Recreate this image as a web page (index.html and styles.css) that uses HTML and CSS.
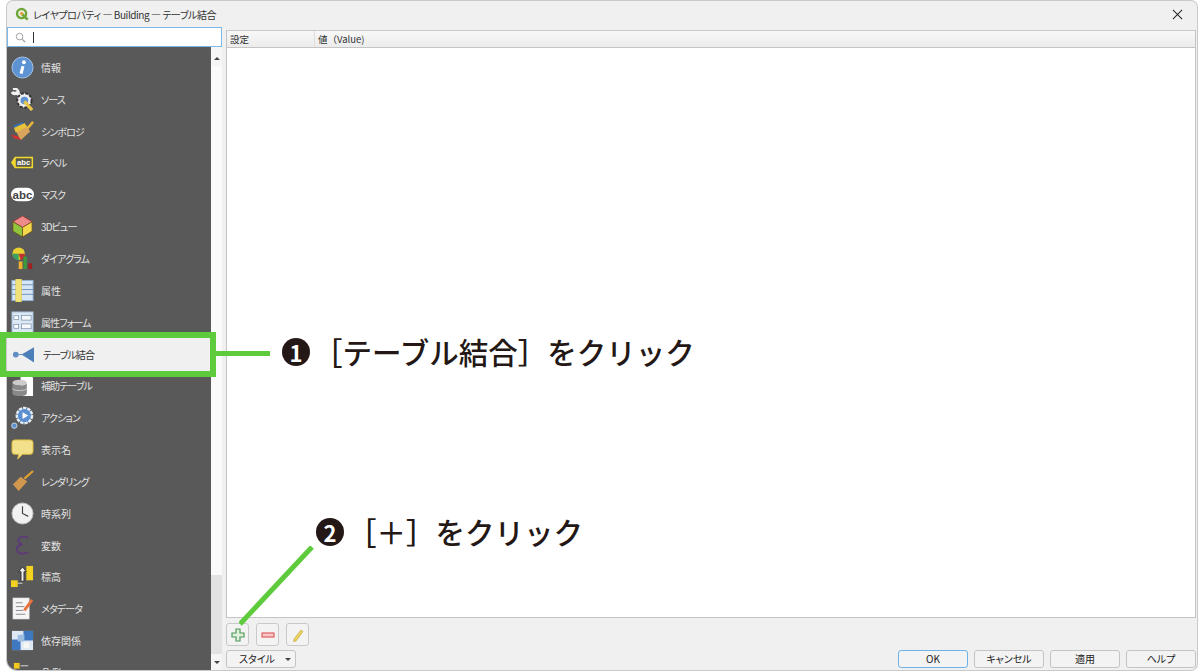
FILE: index.html
```html
<!DOCTYPE html>
<html lang="ja">
<head>
    <meta charset="UTF-8">
    <title>レイヤプロパティ — Building — テーブル結合</title>
    <link rel="stylesheet" href="styles.css">
</head>
<body>
    <div class="window">
        <div class="titlebar">
            <svg class="app-logo" viewBox="0 0 16 16">
                <circle cx="7.5" cy="7.5" r="5.2" fill="none" stroke="#6fa83a" stroke-width="2.8"/>
                <path d="M8 8 L14.5 14.5" stroke="#6fa83a" stroke-width="3"/>
                <circle cx="7.5" cy="7.5" r="2" fill="#e8a33a"/>
            </svg>
            <span class="title-text">レイヤプロパティ — Building — テーブル結合</span>
            <svg class="close-icon" viewBox="0 0 12 12"><path d="M1 1 L11 11 M11 1 L1 11" stroke="#222" stroke-width="1.1"/></svg>
        </div>
        <div class="content">
            <div class="sidebar">
                <div class="search">
                    <svg class="search-icon" viewBox="0 0 12 12"><circle cx="5" cy="5" r="3.6" fill="none" stroke="#999" stroke-width="1"/><path d="M8 8 L11 11" stroke="#999" stroke-width="1.4"/></svg>
                    <span class="caret"></span>
                </div>
                <div class="nav-wrap">
                    <div class="nav">
                        <div class="nav-item">
                            <svg class="ico" viewBox="0 0 24 24"><circle cx="12" cy="12" r="11" fill="#5d92d3" stroke="#a9c6e8"/><circle cx="13.5" cy="6.5" r="2" fill="#fff"/><path d="M12.5 10.5 L10.5 18.5" stroke="#fff" stroke-width="3.2"/></svg>
                            <span>情報</span>
                        </div>
                        <div class="nav-item">
                            <svg class="ico" viewBox="0 0 24 24"><path d="M1 4 Q3 7 6 5 L14 12" stroke="#f2f2f2" stroke-width="3.4" fill="none"/><circle cx="14" cy="13" r="7.5" fill="#eee" stroke="#333" stroke-dasharray="3 1.5" stroke-width="2"/><circle cx="14" cy="13" r="4" fill="#5d92d3"/><path d="M2 1 Q8 0 8 6" stroke="#f2f2f2" stroke-width="2.4" fill="none"/><path d="M14 14 L22 23" stroke="#e8c64a" stroke-width="3.4"/></svg>
                            <span class="kana">ソース</span>
                        </div>
                        <div class="nav-item">
                            <svg class="ico" viewBox="0 0 24 24"><path d="M4 9 L15 5 L20 12 L10 21 Z" fill="#d9a55c"/><path d="M3 8 L14 3 L17 7 L5 13 Z" fill="#e8c33a"/><path d="M0 15 L7 17 L11 21 L3 19 Z" fill="#d43030"/><path d="M2 6 L12 2 L14 3 L3 8 Z" fill="#3a6fb0"/><path d="M17 9 L23 2" stroke="#e3b53a" stroke-width="2.6"/></svg>
                            <span class="kana">シンボロジ</span>
                        </div>
                        <div class="nav-item">
                            <svg class="ico ico-wide" viewBox="0 0 24 24"><path d="M0 12 L4 6 H23 V18 H4 Z" fill="#f0d82e"/><rect x="5" y="7.5" width="16.5" height="9" rx="1" fill="#5a5a4a"/><text class="ico-text" x="13.2" y="15" text-anchor="middle" fill="#fff">abc</text></svg>
                            <span class="kana">ラベル</span>
                        </div>
                        <div class="nav-item">
                            <svg class="ico" viewBox="0 0 24 24"><rect x="0" y="5" width="24" height="14" rx="7" fill="#fff"/><text class="ico-text ico-text-big" x="12" y="16.5" text-anchor="middle" fill="#444">abc</text></svg>
                            <span class="kana">マスク</span>
                        </div>
                        <div class="nav-item">
                            <svg class="ico" viewBox="0 0 24 24"><path d="M12 1 L22 7 L12 13 L2 7 Z" fill="#ee8a8a" stroke="#a33" stroke-width=".8"/><path d="M2 7 L12 13 V23 L2 17 Z" fill="#8fc63c" stroke="#6a4a1a" stroke-width=".8"/><path d="M22 7 L12 13 V23 L22 17 Z" fill="#f2d84a" stroke="#6a4a1a" stroke-width=".8"/></svg>
                            <span class="kana">3Dビュー</span>
                        </div>
                        <div class="nav-item">
                            <svg class="ico" viewBox="0 0 24 24"><circle cx="8" cy="7" r="6.5" fill="#e8d030"/><path d="M8 7 L8 14 A7 7 0 0 1 1.5 7 Z" fill="#3aa060"/><path d="M8 7 L14.5 7 A7 7 0 0 1 10 13.5 Z" fill="#c03030"/><rect x="8" y="15" width="4" height="8" fill="#f0b030"/><rect x="13" y="10" width="3.5" height="13" fill="#3c9a3c"/><rect x="18" y="17" width="4" height="6" fill="#a02020"/></svg>
                            <span class="kana">ダイアグラム</span>
                        </div>
                        <div class="nav-item">
                            <svg class="ico" viewBox="0 0 24 24"><rect x="1" y="1.5" width="22" height="21" fill="#d7e6f5" stroke="#8fb2d6"/><path d="M1 6 H23 M1 11 H23 M1 16 H23" stroke="#6d92b8"/><rect x="5" y="0" width="6" height="24" fill="#f2e27a" stroke="#d9c64a" stroke-width=".6"/></svg>
                            <span>属性</span>
                        </div>
                        <div class="nav-item">
                            <svg class="ico" viewBox="0 0 24 24"><rect x="1" y="1" width="22" height="22" fill="#dce8f4" stroke="#9fbbd6"/><rect x="3" y="5" width="5" height="4" fill="#fff" stroke="#6d88a6" stroke-width=".7"/><rect x="3" y="14" width="5" height="4" fill="#fff" stroke="#6d88a6" stroke-width=".7"/><rect x="11" y="4.5" width="10" height="5" fill="#f6f9fc" stroke="#6d88a6" stroke-width=".7"/><rect x="11" y="13.5" width="10" height="5" fill="#f6f9fc" stroke="#6d88a6" stroke-width=".7"/></svg>
                            <span class="kana">属性フォーム</span>
                        </div>
                        <div class="nav-item selected">
                            <svg class="ico" viewBox="0 0 24 24"><circle cx="5" cy="12" r="3" fill="#5f8ec4"/><path d="M8 12 L12 12" stroke="#5f8ec4"/><path d="M11 12 L28 2 V23 Z" fill="#4d7fb8"/></svg>
                            <span class="kana">テーブル結合</span>
                        </div>
                        <div class="nav-item">
                            <svg class="ico" viewBox="0 0 24 24"><path d="M10 0 H19 L23 4 V23 H10 Z" fill="#fff"/><ellipse cx="9" cy="9" rx="7.5" ry="3" fill="#ccc"/><path d="M1.5 9 V20 C1.5 24 16.5 24 16.5 20 V9 C16.5 13 1.5 13 1.5 9 Z" fill="#888"/><path d="M1.5 15 C1.5 18 16.5 18 16.5 15" stroke="#ccc" fill="none"/></svg>
                            <span class="kana">補助テーブル</span>
                        </div>
                        <div class="nav-item">
                            <svg class="ico" viewBox="0 0 24 24"><circle cx="14" cy="10" r="8" fill="#5b8fd0" stroke="#e8eef5" stroke-width="2.5" stroke-dasharray="3.5 1"/><path d="M12 6.5 L18 10 L12 13.5 Z" fill="#fff"/><circle cx="3.5" cy="20.5" r="2.8" fill="#5b8fd0" stroke="#cfd8e2"/></svg>
                            <span class="kana">アクション</span>
                        </div>
                        <div class="nav-item">
                            <svg class="ico" viewBox="0 0 24 24"><path d="M4 2 H20 Q23 2 23 5 V14 Q23 17 20 17 H12 L7 22 L8 17 H4 Q1 17 1 14 V5 Q1 2 4 2 Z" fill="#f2e08a" stroke="#d9b93a"/></svg>
                            <span>表示名</span>
                        </div>
                        <div class="nav-item">
                            <svg class="ico" viewBox="0 0 24 24"><path d="M14 9 L23 1" stroke="#e0a030" stroke-width="2.2"/><path d="M2 15 L10 7 L17 12 L8 22 Z" fill="#d2974e"/></svg>
                            <span class="kana">レンダリング</span>
                        </div>
                        <div class="nav-item">
                            <svg class="ico" viewBox="0 0 24 24"><circle cx="12" cy="12" r="11" fill="#f1f1f1" stroke="#bbb"/><path d="M12 4.5 V12 L18 15" stroke="#444" stroke-width="1.2" fill="none"/></svg>
                            <span>時系列</span>
                        </div>
                        <div class="nav-item">
                            <svg class="ico" viewBox="0 0 24 24"><path d="M18 4 Q11 1 8 5 Q6 9 12 11 Q5 12 6 17 Q9 23 18 19" fill="none" stroke="#5d3a78" stroke-width="2"/></svg>
                            <span>変数</span>
                        </div>
                        <div class="nav-item">
                            <svg class="ico" viewBox="0 0 24 24"><rect x="16" y="1" width="7" height="15" fill="#f2d21e"/><path d="M12 2 L8 7 H10.5 V17 H13.5 V7 H16 Z" fill="#eee" stroke="#222" stroke-width=".8"/><rect x="0" y="16" width="7" height="7" fill="#f2d21e"/><path d="M7 19 H12" stroke="#ddd"/></svg>
                            <span>標高</span>
                        </div>
                        <div class="nav-item">
                            <svg class="ico" viewBox="0 0 24 24"><rect x="2" y="1" width="17" height="22" fill="#f6f6f6" stroke="#ccc" stroke-width=".6"/><path d="M5 6 H12 M5 10 H14 M5 14 H13 M5 18 H15" stroke="#888"/><path d="M14 14 L22 3" stroke="#e8703a" stroke-width="3"/></svg>
                            <span class="kana">メタデータ</span>
                        </div>
                        <div class="nav-item">
                            <svg class="ico" viewBox="0 0 24 24"><rect x="1" y="2" width="22" height="20" fill="#dfe9f4"/><rect x="1" y="11" width="9" height="11" fill="#3f78c0"/><rect x="13" y="2" width="10" height="10" fill="#3f78c0"/><rect x="7" y="6" width="7" height="7" fill="#9cbce0"/><rect x="13" y="14" width="6" height="6" fill="#f6f6f6"/></svg>
                            <span>依存関係</span>
                        </div>
                        <div class="nav-item">
                            <svg class="ico" viewBox="0 0 24 24"><rect x="3" y="2" width="6" height="6" fill="#f2c81e"/><path d="M10 5 H18" stroke="#ddd"/><rect x="3" y="11" width="6" height="6" fill="#d43030"/></svg>
                            <span>凡例</span>
                        </div>
                    </div>
                    <div class="scrollbar">
                        <div class="arrow arrow-up"></div>
                        <div class="thumb"></div>
                        <div class="track"></div>
                        <div class="arrow arrow-down"></div>
                    </div>
                </div>
            </div>
            <div class="panel">
                <div class="table">
                    <div class="table-head">
                        <div class="col col-first">設定</div>
                        <div class="col">値（Value)</div>
                    </div>
                </div>
                <div class="toolbar">
                    <button class="tool-btn">
                        <svg viewBox="0 0 14 14" class="tool-ico"><path d="M5 1 H9 V5 H13 V9 H9 V13 H5 V9 H1 V5 H5 Z" fill="#dff0dc" stroke="#4f9a5a" stroke-width="1.2"/></svg>
                    </button>
                    <button class="tool-btn">
                        <svg viewBox="0 0 14 14" class="tool-ico"><rect x="1" y="5" width="12" height="4" fill="#f7c8c8" stroke="#e26060" stroke-width="1.2"/></svg>
                    </button>
                    <button class="tool-btn">
                        <svg viewBox="0 0 14 14" class="tool-ico"><path d="M3 11 L10 2 L12 3.5 L5 13 L2.5 13.5 Z" fill="#f0d35a" stroke="#b89a3a" stroke-width=".6"/></svg>
                    </button>
                </div>
                <div class="footer">
                    <button class="btn btn-style">スタイル<span class="drop"></span></button>
                    <div class="btn-group">
                        <button class="btn btn-default">OK</button>
                        <button class="btn">キャンセル</button>
                        <button class="btn">適用</button>
                        <button class="btn">ヘルプ</button>
                    </div>
                </div>
            </div>
        </div>
    </div>

    <div class="callout-box"></div>
    <div class="callout-line"></div>
    <div class="note note-1"><span class="num">1</span><span class="note-text">［テーブル結合］をクリック</span></div>
    <svg class="callout-diag" viewBox="0 0 80 84"><path d="M73 1 L1 78" stroke="#5ecb3c" stroke-width="5"/></svg>
    <div class="note note-2"><span class="num">2</span><span class="note-text">［＋］をクリック</span></div>
</body>
</html>
```

FILE: styles.css
```css
html, body {
    margin: 0;
    height: 672px;
    overflow: hidden;
    background-color: #fff;
}

body {
    position: relative;
    box-sizing: border-box;
    padding: 1px 3px 2px 7px;
    font-family: "Noto Sans CJK JP", "Liberation Sans", sans-serif;
    font-feature-settings: "palt";
}

.window {
    height: 100%;
    display: flex;
    flex-direction: column;
    background-color: #f0f0f0;
    border-radius: 6px 6px 6px 10px;
    box-shadow: 0 0 0 1px #c9c9c9;
    overflow: hidden;
}

.titlebar {
    height: 26px;
    flex: none;
    display: flex;
    align-items: center;
    padding: 0 14px 0 8px;
    font-size: 10px;
    color: #333;
}

.app-logo {
    width: 14px;
    height: 14px;
    margin-right: 4px;
}

.title-text {
    flex: 1;
    letter-spacing: -0.45px;
}

.close-icon {
    width: 11px;
    height: 11px;
}

.content {
    flex: 1;
    min-height: 0;
    display: flex;
}

.sidebar {
    width: 215px;
    flex: none;
    display: flex;
    flex-direction: column;
}

.search {
    height: 20px;
    flex: none;
    box-sizing: border-box;
    display: flex;
    align-items: center;
    padding-left: 7px;
    background-color: #fff;
    border: 1px solid #7cb9e8;
}

.search-icon {
    width: 11px;
    height: 11px;
}

.caret {
    width: 1px;
    height: 11px;
    margin-left: 7px;
    background-color: #333;
}

.nav-wrap {
    flex: 1;
    min-height: 0;
    display: flex;
}

.nav {
    flex: 1;
    padding-top: 4.5px;
    background-color: #595959;
    overflow: hidden;
}

.nav-item {
    height: 31.85px;
    display: flex;
    align-items: center;
    gap: 7px;
    padding-left: 4px;
    font-size: 10px;
    color: #e2e2e2;
}

.kana {
    letter-spacing: -0.9px;
}

.nav-item.selected {
    background-color: #f0f0f0;
    box-shadow: 0 0 0 2px #f0f0f0;
    color: #333;
    gap: 9px;
}

.ico {
    width: 23px;
    height: 23px;
    flex: none;
}

.ico-text {
    font-family: "Liberation Sans", sans-serif;
    font-size: 8px;
    font-weight: bold;
}

.ico-text-big {
    font-size: 12px;
}

.scrollbar {
    width: 11px;
    flex: none;
    display: flex;
    flex-direction: column;
    background-color: #f5f5f5;
}

.arrow {
    height: 16px;
    flex: none;
    display: flex;
    align-items: center;
    justify-content: center;
    margin-top: 3px;
}

.arrow::before {
    content: "";
    border-left: 3px solid transparent;
    border-right: 3px solid transparent;
}

.arrow-up::before {
    border-bottom: 3px solid #444;
}

.arrow-down {
    margin-top: 0;
}

.arrow-down::before {
    border-top: 3px solid #444;
}

.thumb {
    height: 509px;
    flex: none;
    background-color: #fafafa;
}

.track {
    flex: 1;
    background-color: #e2e2e2;
}

.panel {
    flex: 1;
    min-width: 0;
    display: flex;
    flex-direction: column;
    padding: 3px 1px 2px 4px;
}

.table {
    flex: 1;
    background-color: #fff;
    border: 1px solid #c4c4c4;
    border-top: none;
}

.table-head {
    height: 18px;
    display: flex;
    box-sizing: border-box;
    background: linear-gradient(#f8f8f8, #ececec);
    border-top: 1px solid #c8c8c8;
    border-bottom: 1px solid #c4c4c4;
    font-size: 9.5px;
    line-height: 16px;
    font-feature-settings: normal;
    color: #333;
}

.col {
    padding-left: 3px;
}

.col-first {
    width: 84px;
    border-right: 1px solid #ddd;
}

.toolbar {
    flex: none;
    display: flex;
    gap: 7px;
    margin-top: 5px;
}

.tool-btn {
    width: 23px;
    height: 23px;
    padding: 0;
    display: flex;
    align-items: center;
    justify-content: center;
    background-color: #f3f3f3;
    border: 1px solid #c9c9c9;
    border-radius: 3px;
}

.tool-ico {
    width: 14px;
    height: 14px;
}

.footer {
    flex: none;
    display: flex;
    justify-content: space-between;
    margin-top: 4px;
}

.btn-group {
    display: flex;
    gap: 6px;
}

.btn {
    width: 70px;
    height: 18px;
    padding: 0;
    background-color: #f3f3f3;
    border: 1px solid #c4c4c4;
    border-radius: 3px;
    font-family: inherit;
    font-feature-settings: inherit;
    font-size: 10px;
    line-height: 16px;
    color: #222;
}

.btn-default {
    border-color: #6fb2e6;
}

.btn-style {
    position: relative;
    padding-right: 8px;
}

.drop {
    position: absolute;
    right: 4px;
    top: 7px;
    border-left: 3px solid transparent;
    border-right: 3px solid transparent;
    border-top: 3px solid #444;
}

/* annotations drawn over the screenshot */
.callout-box {
    position: absolute;
    left: 0;
    top: 332px;
    width: 204px;
    height: 33px;
    border: 6px solid #5ecb3c;
}

.callout-line {
    position: absolute;
    left: 216px;
    top: 351px;
    width: 54px;
    height: 5px;
    background-color: #5ecb3c;
}

.callout-diag {
    position: absolute;
    left: 239px;
    top: 546px;
    width: 80px;
    height: 84px;
}

.note {
    position: absolute;
    display: flex;
    align-items: center;
    gap: 3px;
    color: #231815;
    font-size: 29.5px;
    font-weight: 500;
    line-height: 32px;
    font-feature-settings: normal;
    white-space: nowrap;
}

.note-text {
    margin-top: -2px;
}

.note-1 {
    left: 282px;
    top: 337px;
}

.note-2 {
    left: 316px;
    top: 517px;
}

.num {
    width: 28px;
    height: 28px;
    border-radius: 50%;
    background-color: #231815;
    color: #fff;
    font-size: 22px;
    font-weight: bold;
    line-height: 28px;
    text-align: center;
}
```
